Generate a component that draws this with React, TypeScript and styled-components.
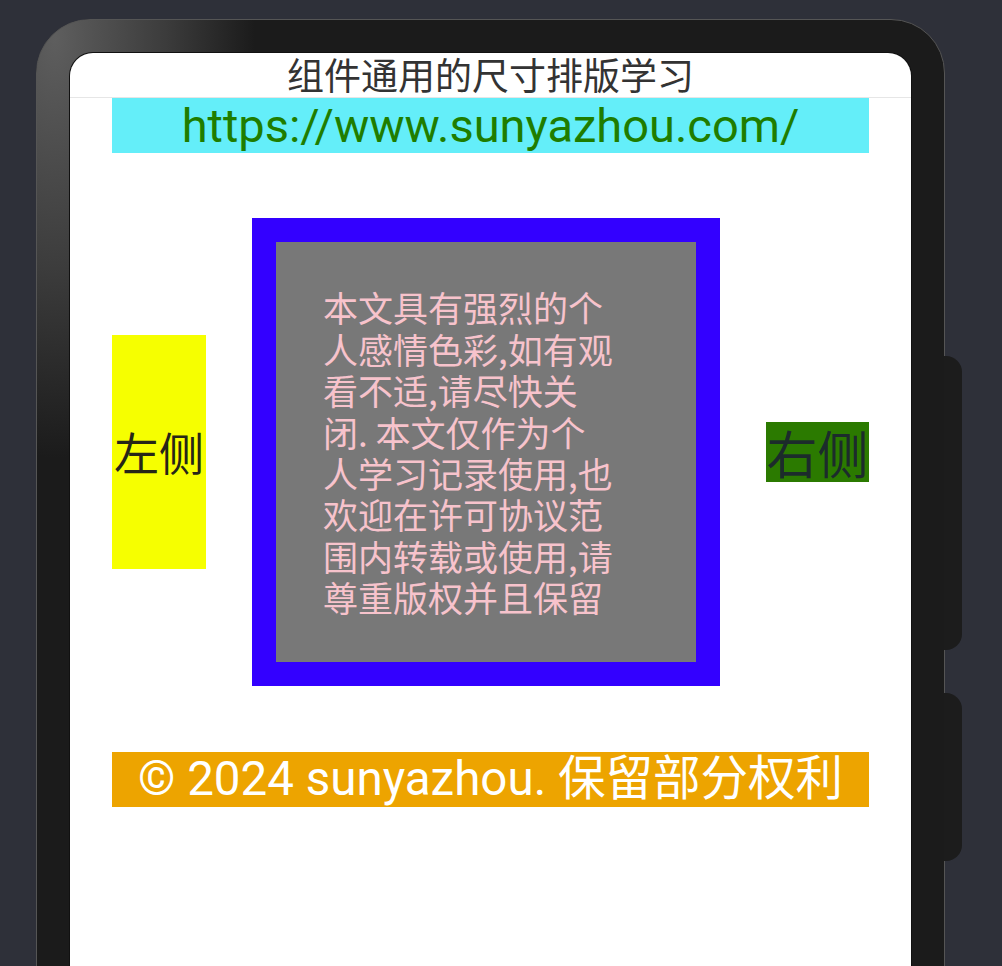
import React from 'react';
import styled, { createGlobalStyle } from 'styled-components';

const GlobalStyle = createGlobalStyle`
  html, body {
    margin: 0;
    padding: 0;
    background: #2e3039;
    overflow: hidden;
  }
  * {
    box-sizing: border-box;
  }
`;

const Stage = styled.div`
  width: 1002px;
  height: 966px;
  padding: 19px 0 0 36px;
  overflow: hidden;
  background: #2e3039;
`;

const Phone = styled.div`
  position: relative;
  width: 909px;
  height: 1040px;
  padding: 33px;
  border: 1px solid #555;
  border-radius: 54px;
  background:
    radial-gradient(ellipse 200px 420px at 18px 18px, #5e5e5e 0%, #3c3c3c 55%, rgba(28, 28, 28, 0) 100%),
    #1b1b1b;
`;

const SideKey = styled.div<{ $top: number; $height: number }>`
  position: absolute;
  left: 100%;
  top: ${(p) => p.$top}px;
  width: 18px;
  height: ${(p) => p.$height}px;
  background: #1c1c1c;
  border-radius: 0 16px 16px 0;
`;

const Screen = styled.div`
  height: 100%;
  background: #fff;
  border-radius: 23px 23px 0 0;
  box-shadow: 0 0 0 1px #111;
  display: flex;
  flex-direction: column;
`;

const TitleBar = styled.div`
  height: 45px;
  flex-shrink: 0;
  display: flex;
  align-items: center;
  justify-content: center;
  border-bottom: 1px solid #e6e6e6;
  font-family: 'Noto Sans CJK SC', sans-serif;
  font-size: 37px;
  color: #333;
  line-height: 40px;
  padding-bottom: 2px;
`;

const Content = styled.div`
  display: flex;
  flex-direction: column;
  padding: 0 42px;
`;

const Strip = styled.div<{ $bg: string; $fg: string }>`
  height: 55px;
  display: flex;
  align-items: center;
  justify-content: center;
  background: ${(p) => p.$bg};
  color: ${(p) => p.$fg};
  font-family: Roboto, 'Noto Sans CJK SC', sans-serif;
  font-size: 47px;
  line-height: 1;
  white-space: nowrap;
`;

const FooterStrip = styled(Strip)`
  font-size: 47.5px;
  margin-top: 66px;
`;

const Row = styled.div`
  margin-top: 65px;
  height: 468px;
  display: flex;
  align-items: center;
  justify-content: space-between;
`;

const SideTag = styled.div<{ $bg: string; $fg: string; $size: number }>`
  display: flex;
  align-items: center;
  justify-content: center;
  background: ${(p) => p.$bg};
  color: ${(p) => p.$fg};
  font-family: 'Noto Sans CJK SC', sans-serif;
  font-size: ${(p) => p.$size}px;
  line-height: 1.18;
  white-space: nowrap;
`;

const LeftTag = styled(SideTag)`
  width: 94px;
  height: 234px;
`;

const RightTag = styled(SideTag)`
  width: 103px;
  height: 60px;
`;

const ArticleBox = styled.div`
  width: 468px;
  height: 468px;
  border: 24px solid #3300ff;
  background: #787878;
  display: flex;
  align-items: center;
  padding-left: 47px;
`;

const ArticleText = styled.p`
  margin: 0;
  font-family: 'Noto Sans CJK SC', sans-serif;
  font-size: 35px;
  line-height: 41.4px;
  color: #f7c3cc;
  white-space: nowrap;
`;

const lines = [
  '本文具有强烈的个',
  '人感情色彩,如有观',
  '看不适,请尽快关',
  '闭. 本文仅作为个',
  '人学习记录使用,也',
  '欢迎在许可协议范',
  '围内转载或使用,请',
  '尊重版权并且保留',
];

export default function App() {
  return (
    <>
      <GlobalStyle />
      <Stage>
        <Phone>
          <SideKey $top={336} $height={294} />
          <SideKey $top={673} $height={168} />
          <Screen>
            <TitleBar>组件通用的尺寸排版学习</TitleBar>
            <Content>
              <Strip $bg="#64eef9" $fg="#1f7d00">
                https://www.sunyazhou.com/
              </Strip>
              <Row>
                <LeftTag $bg="#f6ff00" $fg="#262617" $size={45}>
                  左侧
                </LeftTag>
                <ArticleBox>
                  <ArticleText>
                    {lines.map((l, i) => (
                      <React.Fragment key={i}>
                        {l}
                        {i < lines.length - 1 && <br />}
                      </React.Fragment>
                    ))}
                  </ArticleText>
                </ArticleBox>
                <RightTag $bg="#2b7a00" $fg="#1c2b2b" $size={51}>
                  右侧
                </RightTag>
              </Row>
              <FooterStrip $bg="#eda400" $fg="#ffffff">
                © 2024 sunyazhou. 保留部分权利
              </FooterStrip>
            </Content>
          </Screen>
        </Phone>
      </Stage>
    </>
  );
}
